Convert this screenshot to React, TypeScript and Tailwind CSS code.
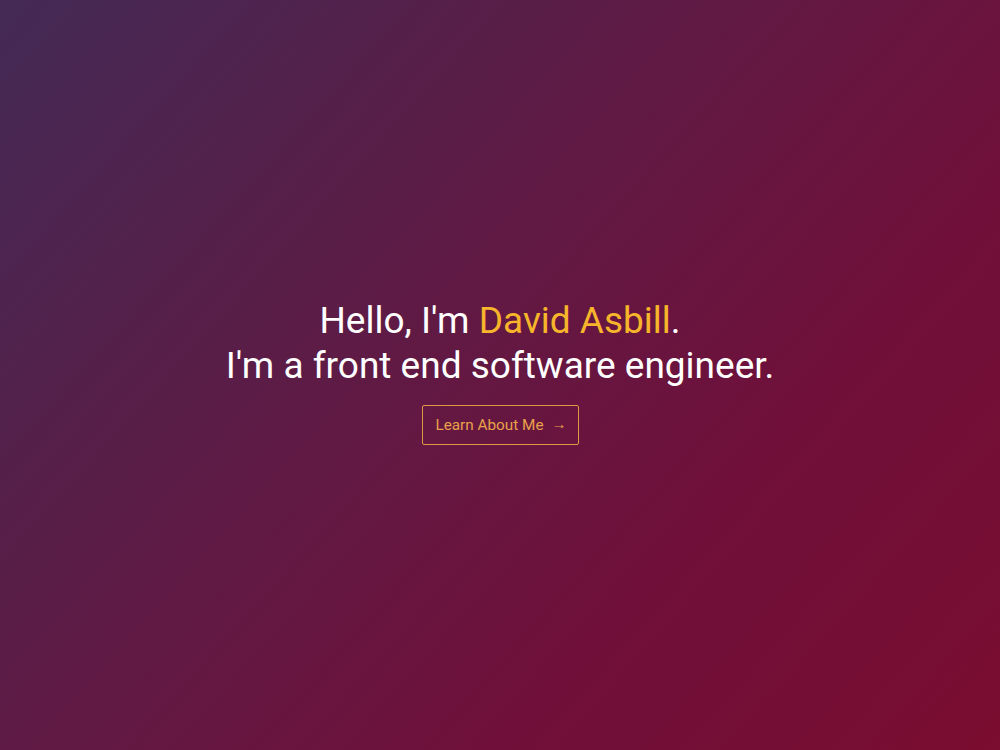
export default function App() {
  return (
    <div className="w-full h-[750px] bg-[linear-gradient(132deg,#432a55_0%,#5e1b45_40%,#70103a_70%,#7a0d30_100%)] flex flex-col items-center justify-center font-['Roboto',sans-serif]">
      <h1 className="text-center text-white text-[37px] leading-[45px] font-normal mt-[-7px]">
        Hello, I'm <span className="text-[#f7b52c]">David Asbill</span>.
        <br />
        I'm a front end software engineer.
      </h1>
      <button className="mt-[17px] h-[40px] w-[157px] border border-[#e09a45] rounded-[2px] text-[#e9a24b] text-[15.3px] flex items-center justify-center gap-[8px] pl-[2px]">
        Learn About Me
        <span className="text-[15px] leading-none mt-[-2px]">→</span>
      </button>
    </div>
  )
}
